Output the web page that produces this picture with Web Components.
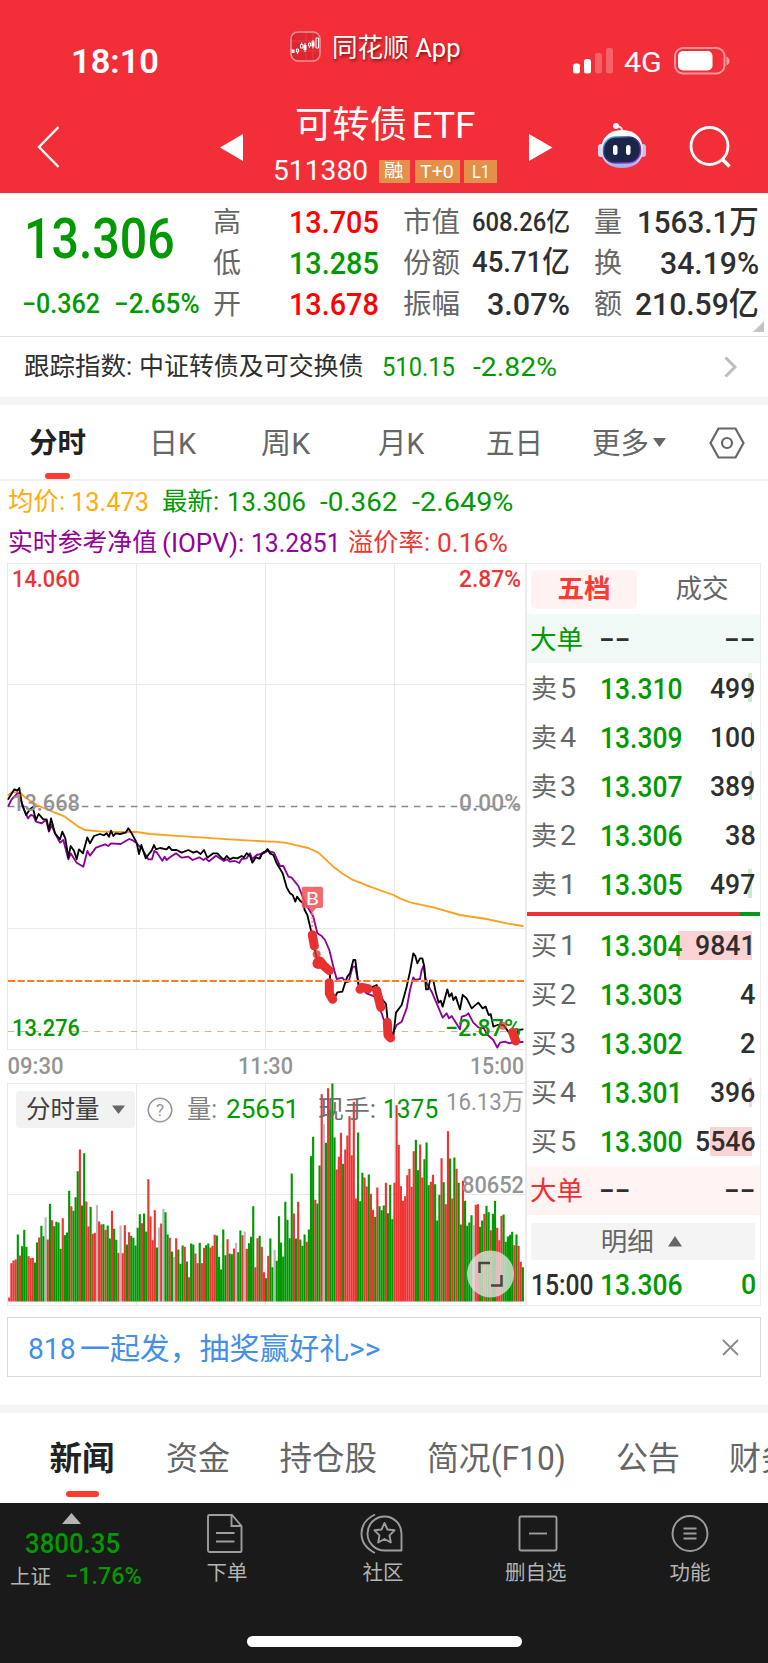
<!DOCTYPE html>
<html lang="zh-CN">
<head>
<meta charset="utf-8">
<meta name="viewport" content="width=device-width">
<title>可转债ETF 511380</title>
<style>
  html, body { margin: 0; padding: 0; background: #fff; }
  body { width: 768px; overflow-x: hidden; font-family: Roboto, "Noto Sans CJK SC", sans-serif; color: #2f2f2f; }
</style>
</head>
<body>
<stock-page></stock-page>

<script>
// Every element is plain markup in an open shadow root
function define(name, html) {
  customElements.define(name, class extends HTMLElement {
    constructor() {
      super();
      this.attachShadow({ mode: "open" }).innerHTML = `
        <style>
          :host { display: block; box-sizing: border-box; }
          .row { display: flex; align-items: center; box-sizing: border-box; }
          .g { color: #009a00; }
          .r { color: #f00; }
          svg { display: block; flex: none; }
        </style>${html}`;
    }
  });
}

// Text squeezed or stretched to the width in "w", with font size "s"
class FitText extends HTMLElement {
  constructor() {
    super();
    this.attachShadow({ mode: "open" });
    this.shadowRoot.innerHTML = `
      <style>
        :host { display: block; flex: none; white-space: nowrap; line-height: 1; }
        span { display: inline-block; transform-origin: 0 50%; vertical-align: top; }
      </style>
      <span><slot></slot></span>
    `;
  }

  connectedCallback() {
    const span = this.shadowRoot.querySelector("span");
    const width = Number(this.getAttribute("w"));
    this.style.fontSize = `${this.getAttribute("s")}px`;
    if (this.hasAttribute("gap")) this.style.marginLeft = `${this.getAttribute("gap")}px`;
    const natural = span.offsetWidth;
    if (natural && width) {
      span.style.transform = `scaleX(${width / natural})`;
      this.style.width = `${width}px`;
    }
  }
}

customElements.define("fit-text", FitText);

define("status-bar", `
  <style>
    :host { height: 96px; color: #fff; }
    .row { align-items: flex-start; }
    .time { margin: 43.5px 0 0 71px; font-weight: 600; }
    .icon { margin: 31px 0 0 131px; }
    .app { margin-top: 34.5px; text-shadow: 1px 2px 3px rgba(80, 0, 0, .65); }
    .signal { margin: 48px 0 0 112px; }
    .net { margin-top: 48.5px; }
    .battery { margin: 47px 0 0 11px; }
  </style>
  <div class="row">
    <fit-text class="time" w="88" s="34">18:10</fit-text>
    <svg class="icon" width="31" height="31" viewBox="0 0 31 31" fill="none" stroke="#fff">
      <rect x="1" y="1" width="29" height="29" rx="7" fill="#dc2630" stroke="#ff8f93" stroke-width="1.6"/>
      <path d="M2 10h27M2 20h27M16 2v27M23 2v27" stroke="#ef5a60" stroke-width=".5"/>
      <path d="M3 18.500v3.500M15 14v5M23 10.500v5" stroke-width="3"/>
      <path d="M6.500 18h2v3h-2zM7.500 21v2M10.500 13.500h2.500v3.500h-2.500zM11.700 11.500v2M18.500 12h2v3h-2zM19.500 15v2M26 7h2.500v10H26zM15 12v9M23 9v8.500"/>
    </svg>
    <fit-text class="app" gap="10.500" w="129" s="26">同花顺 App</fit-text>
    <svg class="signal" width="41" height="26" fill="#fff">
      <rect y="15.500" width="7" height="10" rx="2.500"/>
      <rect x="11" y="11" width="7" height="14.500" rx="2.500"/>
      <rect x="22" y="5" width="7" height="20.500" rx="2.500" opacity=".25"/>
      <rect x="33" width="7" height="25.500" rx="2.500" opacity=".25"/>
    </svg>
    <fit-text class="net" gap="10" w="38" s="28">4G</fit-text>
    <svg class="battery" style="margin-left:12px" width="56" height="28" fill="#fff">
      <rect x="1" y="1" width="49.500" height="25.500" rx="8" fill="none" stroke="#fff" stroke-width="2" opacity=".5"/>
      <rect x="4" y="4" width="34.500" height="19.500" rx="5"/>
      <path d="M52.500 9.500q3 1.500 3 4.500t-3 4.500z" opacity=".55"/>
    </svg>
  </div>
`);

define("nav-bar", `
  <style>
    :host { height: 97px; padding: 5px 0 0 37px; color: #fff; }
    .row { height: 92px; }
    .title { width: 224px; }
    .title .row { height: 46px; }
    .name { justify-content: center; padding-top: 2px; }
    i { display: flex; justify-content: center; align-items: center; height: 23px; margin-left: 4.500px; background: #e39048; font-style: normal; }
  </style>
  <div class="row">
    <svg width="22" height="42" fill="none" stroke="#fff" stroke-width="2.300"><path d="M21.500 1L2 21l19.500 20"/></svg>
    <svg style="margin-left:161px" width="23" height="27" fill="#fff"><path d="M0 13.500L23 0v27z"/></svg>
    <div class="title" style="margin-left:30px">
      <div class="row name"><fit-text w="112" s="37">可转债</fit-text><fit-text gap="5" w="64" s="37">ETF</fit-text></div>
      <div class="row" style="padding-top:2px">
        <fit-text w="95" s="28.500">511380</fit-text>
        <i style="width:32px;margin-left:10.500px"><fit-text w="20" s="18.500">融</fit-text></i>
        <i style="width:45px"><fit-text w="34" s="19">T+0</fit-text></i>
        <i style="width:33px"><fit-text w="18" s="19">L1</fit-text></i>
      </div>
    </div>
    <svg style="margin-left:32px" width="24" height="27" fill="#fff"><path d="M23.500 13.500L0 0v27z"/></svg>
    <svg style="margin:-2px 0 0 44px" width="50" height="48" viewBox="0 0 50 48">
      <defs>
        <linearGradient id="shell" x2="0" y2="1"><stop stop-color="#fff"/><stop offset=".65" stop-color="#dedff6"/><stop offset="1" stop-color="#a9a4e8"/></linearGradient>
        <linearGradient id="rim" x2="1" y2="1"><stop stop-color="#4cd9ff"/><stop offset=".4" stop-color="#23306a"/><stop offset="1" stop-color="#b04cff"/></linearGradient>
      </defs>
      <path d="M24.500 10c1-3 .5-5-5-6" fill="none" stroke="#eef" stroke-width="2"/>
      <circle cx="19" cy="4" r="3" fill="#f5f5ff"/>
      <rect x="1" y="22" width="6" height="13" rx="3" fill="#d6d6f4"/>
      <rect x="43" y="22" width="6" height="13" rx="3" fill="#c2c2ed"/>
      <path d="M25 8C11 8 4 17 4 28s8 18 21 18 21-7 21-18S39 8 25 8z" fill="url(#shell)"/>
      <rect x="6.500" y="15" width="37" height="26" rx="12" fill="#1c2548" stroke="url(#rim)" stroke-width="1.500"/>
      <rect x="16" y="23" width="4.500" height="10" rx="2.200" fill="#fff"/>
      <rect x="29" y="23" width="4.500" height="10" rx="2.200" fill="#fff"/>
    </svg>
    <svg style="margin-left:42px" width="43" height="43" fill="none" stroke="#fff" stroke-width="2.800">
      <circle cx="20.500" cy="20" r="18.500"/><path d="M33 33l7.500 7.500" stroke-width="3.600"/>
    </svg>
  </div>
`);

define("quote-panel", `
  <style>
    :host { display: flex; height: 144px; border-bottom: 1px solid #e4e4e4; position: relative; font-weight: 500; }
    .left { width: 213px; }
    .price { height: 90px; padding: 2px 0 0 24px; }
    .change { height: 41px; padding: 2px 0 0 22px; }
    .grid { display: grid; grid-template: repeat(3, 41px) / 166px 167px 165px; column-gap: 24px; padding-top: 8px; }
    .grid .row { justify-content: space-between; }
    .k { color: #666; font-weight: 400; padding-top: 3px; }
    svg { position: absolute; right: 4px; bottom: 4px; }
  </style>
  <div class="left g">
    <div class="row price"><fit-text w="151" s="56">13.306</fit-text></div>
    <div class="row change"><fit-text w="78" s="27">−0.362</fit-text><fit-text gap="14" w="86" s="27">−2.65%</fit-text></div>
  </div>
  <div class="grid">
    <div class="row"><fit-text class="k" w="28" s="28">高</fit-text><fit-text class="r" w="90" s="32">13.705</fit-text></div>
    <div class="row"><fit-text class="k" w="57" s="28">市值</fit-text><fit-text w="98" s="26">608.26亿</fit-text></div>
    <div class="row"><fit-text class="k" w="28" s="28">量</fit-text><fit-text w="122" s="32">1563.1万</fit-text></div>
    <div class="row"><fit-text class="k" w="28" s="28">低</fit-text><fit-text class="g" w="90" s="32">13.285</fit-text></div>
    <div class="row"><fit-text class="k" w="57" s="28">份额</fit-text><fit-text w="98" s="29.500">45.71亿</fit-text></div>
    <div class="row"><fit-text class="k" w="28" s="28">换</fit-text><fit-text w="99" s="32">34.19%</fit-text></div>
    <div class="row"><fit-text class="k" w="28" s="28">开</fit-text><fit-text class="r" w="90" s="32">13.678</fit-text></div>
    <div class="row"><fit-text class="k" w="57" s="28">振幅</fit-text><fit-text w="83" s="32">3.07%</fit-text></div>
    <div class="row"><fit-text class="k" w="28" s="28">额</fit-text><fit-text w="124" s="32">210.59亿</fit-text></div>
  </div>
  <svg width="11" height="11" fill="#c4c4c4"><path d="M11 0v11H0z"/></svg>
`);

define("index-row", `
  <style>
    :host { height: 68px; border-bottom: 8px solid #f4f4f4; padding: 0 31px 0 24px; }
    .row { height: 60px; }
  </style>
  <div class="row">
    <fit-text w="108" s="25.500">跟踪指数:</fit-text>
    <fit-text gap="7" w="225" s="25.500">中证转债及可交换债</fit-text>
    <fit-text class="g" gap="18" w="73" s="26">510.15</fit-text>
    <fit-text class="g" gap="18" w="84" s="26">-2.82%</fit-text>
    <svg style="margin-left:auto" width="13" height="22" fill="none" stroke="#bdbdbd" stroke-width="3"><path d="M1.500 1.500L11 11l-9.500 9.500"/></svg>
  </div>
`);

define("period-tabs", `
  <style>
    :host { height: 76px; border-bottom: 2px solid #f0f0f0; padding-left: 29px; color: #666; position: relative; }
    .row { height: 76px; }
    fit-text { padding-top: 2px; }
    .on { color: #222; font-weight: 700; }
    .bar { position: absolute; left: 45px; bottom: 0; width: 25px; height: 6px; border-radius: 3px; background: #fb3b32; }
  </style>
  <div class="row">
    <fit-text class="on" w="57" s="28.500">分时</fit-text>
    <fit-text gap="63" w="47" s="29">日K</fit-text>
    <fit-text gap="65" w="49" s="29">周K</fit-text>
    <fit-text gap="68" w="46" s="29">月K</fit-text>
    <fit-text gap="62" w="57" s="29">五日</fit-text>
    <fit-text gap="49" w="57" s="29">更多</fit-text>
    <svg style="margin-left:4px" width="14" height="10" fill="#666"><path d="M0 0h13L6.500 9z"/></svg>
    <svg style="margin-left:41.500px" width="36" height="32" fill="none" stroke="#666" stroke-width="2.200">
      <path d="M9.500 1.500h17L34.500 16l-8 14.500h-17L1.500 16z"/><circle cx="18" cy="16" r="5"/>
    </svg>
  </div>
  <div class="bar"></div>
`);

define("chart-legend", `
  <style>
    :host { padding-left: 8px; }
    .row { height: 41px; }
    .avg { color: #ffac0c; }
    .iopv { color: #95009c; }
    .prem { color: #ee3434; }
  </style>
  <div class="row">
    <fit-text class="avg" w="57" s="25">均价:</fit-text><fit-text class="avg" gap="6" w="78" s="26">13.473</fit-text>
    <fit-text class="g" gap="13" w="57" s="25">最新:</fit-text><fit-text class="g" gap="8" w="79" s="26">13.306</fit-text>
    <fit-text class="g" gap="14" w="78" s="26">-0.362</fit-text>
    <fit-text class="g" gap="14" w="102" s="26">-2.649%</fit-text>
  </div>
  <div class="row">
    <fit-text class="iopv" w="149" s="25">实时参考净值</fit-text><fit-text class="iopv" gap="5" w="82" s="26">(IOPV):</fit-text>
    <fit-text class="iopv" gap="7" w="90" s="26">13.2851</fit-text>
    <fit-text class="prem" gap="7" w="82" s="25">溢价率:</fit-text><fit-text class="prem" gap="7" w="71" s="26">0.16%</fit-text>
  </div>
`);

define("price-chart", `
  <style>
    text { font-size: 24px; font-weight: 500; }
    .line { fill: none; stroke-width: 5.500; stroke-linejoin: round; stroke-linecap: round; }
    .deal { fill: none; stroke: #e93030; stroke-width: 27; stroke-linejoin: round; stroke-linecap: round; }
  </style>
  <svg width="518" height="520" viewBox="7 563 518 520">
    <path d="M7 563.500h518M7 684.500h518M7 928.500h518M7 1049.500h518M7.500 563v487M136.500 563v487M265.500 563v487M394.500 563v487" stroke="#e9e9e9" fill="none"/>
    <path d="M8 806.500h516" stroke="#888" stroke-width="1.300" stroke-dasharray="6.500 5.800"/>
    <path d="M8 1031.500h516" stroke="#d8b48c" stroke-width="1.200" stroke-dasharray="6.500 5.800"/>
    <!-- morning session -->
    <g transform="translate(0 560) scale(.33333)">
      <polyline class="line" stroke="#ff9f1c" points="25,705 35,697 60,697 75,712 110,735 150,752 195,770 235,800 255,810 300,814 360,816 410,816 450,822 520,827 600,832 700,839 810,845"/>
      <polyline class="line" stroke="#8d0099" points="25,738 35,718 52,700 60,700 68,740 84,775 92,765 100,767 108,785 125,790 138,780 147,815 155,795 165,820 180,848 190,840 205,898 212,880 230,908 250,920 262,873 270,887 288,863 315,853 325,858 333,850 362,852 377,843 388,837 400,842 410,850 425,865 445,898 456,898 463,873 470,877 487,902 494,890 500,900 510,892 528,880 545,893 565,890 578,900 598,892 610,900 617,895 627,904 648,887 672,903 680,898 690,905 705,903 718,909 725,897 740,895 750,880 757,897 770,885 790,880 803,872"/>
      <polyline class="line" stroke="#000" points="25,717 43,688 52,692 58,684 63,722 78,765 90,748 98,742 108,780 116,762 130,778 140,778 147,812 153,775 165,820 180,838 187,815 196,835 205,892 212,858 222,872 230,898 237,868 249,880 262,832 270,850 282,828 300,822 312,826 320,820 327,830 333,812 340,828 347,820 360,822 377,818 385,805 395,820 410,848 417,882 424,855 437,895 447,882 455,872 462,855 468,868 480,864 500,868 507,860 515,870 530,870 545,878 565,870 580,878 590,874 602,882 612,870 622,893 640,880 652,880 665,894 672,898 680,888 690,898 700,893 712,895 725,888 732,892 740,880 750,888 757,908 768,892 778,896 788,878 797,876 803,868 810,880"/>
    </g>
    <text x="12" y="811" fill="#949494" textLength="68" lengthAdjust="spacingAndGlyphs">13.668</text>
    <!-- afternoon session -->
    <g transform="translate(260 780) scale(.33333)">
      <polyline class="line" stroke="#ff9f1c" points="30,185 40,185 75,188 110,196 145,204 175,218 220,260 250,283 275,298 330,320 400,345 420,355 450,367 520,382 600,405 680,417 740,430 788,438"/>
      <polyline class="line" stroke="#8d0099" points="3,222 22,212 42,218 60,258 70,258 85,290 95,293 115,318 130,355 145,385 160,410 172,460 185,468 195,480 208,510 220,560 230,597 247,593 258,607 266,605 278,560 286,560 297,620 320,640 345,650 365,700 378,740 390,780 410,735 425,725 440,685 450,630 460,592 466,600 480,597 485,570 490,558 500,610 515,635 530,670 548,713 560,700 567,715 575,708 600,748 605,710 618,706 625,700 640,728 655,742 672,745 680,762 700,780 712,803 720,788 735,785 748,790 758,787 788,786"/>
      <polyline class="line" stroke="#000" points="0,235 5,222 15,215 22,208 30,220 40,225 50,250 68,280 80,322 90,340 98,345 106,365 111,350 120,362 130,370 134,390 142,405 148,430 155,460 162,500 172,540 185,540 210,570 210,640 222,658 232,637 247,635 255,610 262,590 270,580 280,540 286,540 297,625 310,615 335,622 350,615 360,650 378,672 385,740 400,768 408,698 425,675 440,620 450,575 460,520 466,528 472,550 480,535 487,535 493,560 498,628 504,628 510,602 520,602 528,640 536,668 542,662 548,680 562,628 568,650 575,640 580,660 587,650 600,688 608,645 620,655 635,685 655,668 668,685 677,680 686,705 692,702 700,740 712,735 730,735 745,755 755,760 768,785 775,750 788,748"/>
    </g>
    <path d="M8 981h516" stroke="#ff7f1f" stroke-width="2" stroke-dasharray="7.200 2.400"/>
    <text x="445" y="1035.500" fill="#009a00" textLength="76" lengthAdjust="spacingAndGlyphs">−2.87%</text>
    <g transform="translate(260 780) scale(.33333)">
      <path class="deal" d="M157 464L163 498M171 551L180 543L188 552M190 556L208 572M208 608v32L218 658M300 628L306 622L325 626M350 631L362 682M382 727L384 765L392 774M758 757L767 783"/>
      <circle cx="176" cy="549" r="18" fill="#e93030"/>
      <circle cx="170" cy="523" r="12" fill="#e93030" opacity=".8"/>
      <circle cx="728" cy="737" r="12" fill="#e93030" opacity=".7"/>
      <path d="M157 398v50" stroke="#f28080" stroke-width="6" stroke-dasharray="6 6"/>
      <path d="M131 320h52q6 0 6 6v52q0 6-6 6h-14l-12 14-12-14h-14q-6 0-6-6v-52q0-6 6-6z" fill="#ed5557" fill-opacity=".87"/>
    </g>
    <text x="306" y="905" style="font-size:19px;font-weight:400" fill="#fff" textLength="13" lengthAdjust="spacingAndGlyphs">B</text>
    <text x="12" y="586.500" fill="#ee3333" textLength="68" lengthAdjust="spacingAndGlyphs">14.060</text>
    <text x="459" y="586.500" fill="#ee3333" textLength="62" lengthAdjust="spacingAndGlyphs">2.87%</text>
    <text x="459" y="811" fill="#949494" textLength="62" lengthAdjust="spacingAndGlyphs">0.00%</text>
    <text x="12" y="1035.500" fill="#009a00" textLength="68" lengthAdjust="spacingAndGlyphs">13.276</text>
    <g fill="#949494">
      <text x="7.500" y="1074" textLength="56" lengthAdjust="spacingAndGlyphs">09:30</text>
      <text x="238" y="1074" textLength="55" lengthAdjust="spacingAndGlyphs">11:30</text>
      <text x="470" y="1074" textLength="54" lengthAdjust="spacingAndGlyphs">15:00</text>
    </g>
  </svg>
`);

// One token per minute: bar top and its colour (r up, g down, n flat)
const SESSIONS = [
  { start: 0, floor: 664, bars: "652r 549r 541r 538r 463g 526r 498g 449g 500g 528r 534r 533r 547g 487g 472r 437g 468g 411n 478r 371g 420r 438g 425g 427g 506g 414r 465g 457g 332g 378r 392g 351g 273g 208r 376g 219g 364r 439r 380g 461r 458r 375n 424r 433r 432g 449r 436g 475g 392r 446g 479g 518r 436n 519r 435r 493g 456r 467g 473g 496g 443g 402g 429r 400g 454g 297r 409r 480r 390r 502g 442n 430r 386n 396g 463g 473r 514g 530n 474r 508g 551g 496g 500r 544g 591r 490g 493g 520r 549r 488g 549r 503r 495g 490g 502r 497r 464r 466g 530g 568g 448g 525g 477r 520g 522g 505r 488n 516g 451g 465r 454n 506r 489g 470g 378g 561r 474r" },
  { start: 117, floor: 694, bars: "497g 530r 606r 624g 557r 505g 591g 540n 572g 438g 517g 559g 395g 449g 504g 310g 430r 505g 395r 508g 527g 493g 515r 478g 258g 200g 389r 400g 286g 72r 162n 218g 54r 118g 40g 202g 298r 260r 188r 281g 238r 196r 138r 255r 95r 385r 187g 393g 308g 322r 349r 313g 371r 419r 440g 352r 408g 420g 406g 338r 429g 344g 447g 338r 105r 224r 348r 392r 378r 315r 296r 350r 243r 209g 300g 223r 322r 267g 217g 345g 335r 314r 342g 451g 374g 264r 336g 402r 183r 265g 385r 262g 296r 338g 463g 332r 392g 467g 457g 435g 465n 404r 402r 470g 451g 431r 407g 426g 480r 431g 392g 473r 510r 437r 433g 515g 499g 494g 485g 525r 493g 527r 575r 591g" }
];
const BAR_COLORS = { r: "#ee3333", g: "#009a00", n: "#b9b9b9" };

const volumeBars = SESSIONS.map(({ start, floor, bars }) =>
  bars.split(" ").map((bar, i) => {
    const height = (floor - parseInt(bar)) / 3;
    const x = 8.2 + (start + i) * 2.14;
    return `<rect x="${x.toFixed(2)}" y="${(1301.5 - height).toFixed(1)}" width="2.14" height="${height.toFixed(1)}" fill="${BAR_COLORS[bar.slice(-1)]}"/>`;
  }).join("")
).join("");

define("volume-chart", `
  <style>
    :host { position: relative; height: 223px; }
    .tools { position: absolute; left: 8.500px; top: 8px; height: 37px; color: #808080; }
    .pick { width: 119px; height: 37px; background: #f2f2f2; border-radius: 4px; color: #404040; }
    text { font-size: 24px; fill: #949494; }
  </style>
  <svg width="518" height="223" viewBox="7 1083 518 223">
    <path d="M7 1083.500h518M7 1194.500h518M7 1305.500h518M7.500 1083v223M136.500 1083v223M265.500 1083v223M394.500 1083v223" stroke="#e9e9e9" fill="none"/>
    ${volumeBars}
    <text x="446" y="1110" textLength="78" lengthAdjust="spacingAndGlyphs">16.13万</text>
    <text x="462" y="1192.500" textLength="62" lengthAdjust="spacingAndGlyphs" style="font-weight:500">80652</text>
    <circle cx="490.500" cy="1274" r="23.500" fill="#e4e4e4" fill-opacity=".76"/>
    <path d="M479.500 1273v-10h10.500M501.500 1275v10.500H491" fill="none" stroke="#454545" stroke-width="2.500"/>
  </svg>
  <div class="row tools">
    <div class="row pick">
      <fit-text gap="10.500" w="74" s="25.500" style="padding-top:1px">分时量</fit-text>
      <svg style="margin-left:12px" width="13" height="10" fill="#666"><path d="M0 .5h13L6.500 9z"/></svg>
    </div>
    <svg style="margin-left:12.500px" width="26" height="26">
      <circle cx="13" cy="13" r="11.700" fill="none" stroke="#949494" stroke-width="1.600"/>
      <text x="13" y="19" text-anchor="middle" style="font-size:17px">?</text>
    </svg>
    <fit-text gap="13.500" w="30" s="25">量:</fit-text>
    <fit-text class="g" gap="9" w="73" s="25">25651</fit-text>
    <fit-text gap="19" w="58" s="25" style="color:#707070">现手:</fit-text>
    <fit-text class="g" gap="7" w="55" s="25">1375</fit-text>
  </div>
`);

// <depth-row label price qty bar>: one level, "bar" is the width of its volume bar
class DepthRow extends HTMLElement {
  constructor() {
    super();
    this.attachShadow({ mode: "open" });
  }

  connectedCallback() {
    const get = (name) => this.getAttribute(name) || "";
    const [side, level] = get("label");
    const qty = get("qty");
    this.shadowRoot.innerHTML = `
      <style>
        :host { display: grid; box-sizing: border-box; grid-template-columns: 69px 1fr auto; align-items: center; position: relative; height: 49px; padding: 3px 4px 0 4px; }
        .label { display: flex; color: #666; }
        .price { color: #009a00; font-weight: 500; }
        .qty { font-weight: 500; }
        .bar { position: absolute; z-index: -1; right: 8px; top: 10px; height: 29px; width: ${get("bar") || 0}px; background: ${side === "卖" ? "#cdeacd" : "#fbd3d4"}; }
      </style>
      <div class="bar"></div>
      <div class="label"><fit-text w="26" s="26">${side}</fit-text><fit-text gap="3" w="16" s="27">${level}</fit-text></div>
      <fit-text class="price" w="82" s="29">${get("price")}</fit-text>
      <fit-text class="qty" w="${qty.length * 15.2}" s="28.500">${qty}</fit-text>
    `;
  }
}

customElements.define("depth-row", DepthRow);

define("order-book", `
  <style>
    :host { width: 235.500px; height: 743px; border: solid #ececec; border-width: 1px 1px 1px 2px; position: relative; z-index: 0; }
    .tabs { height: 50px; padding: 0 0 0 4px; }
    .tab { display: flex; justify-content: center; align-items: center; width: 106px; height: 39px; }
    .on { background: #fff2f2; border-radius: 5px; color: #fb3b32; font-weight: 700; }
    .big { height: 49px; padding: 3px 4px 0 3px; }
    .split { display: flex; height: 4px; margin: 4px 0 4.500px; }
    .detail { justify-content: center; height: 37px; margin: 8px 5px 0 4px; padding-top: 2px; background: #f4f4f4; color: #666; }
    .last { height: 45px; padding: 7px 4px 0 4px; font-weight: 500; }
  </style>
  <div class="row tabs">
    <div class="tab on"><fit-text w="53" s="26.500">五档</fit-text></div>
    <div class="tab" style="margin-left:12px;color:#666"><fit-text w="53" s="26.500">成交</fit-text></div>
  </div>
  <div class="row big" style="background:#f1faf6">
    <fit-text class="g" w="53" s="26.500">大单</fit-text><fit-text gap="16" w="32" s="29" style="font-weight:500">−−</fit-text><fit-text style="margin-left:auto;font-weight:500" w="32" s="29">−−</fit-text>
  </div>
  <depth-row label="卖5" price="13.310" qty="499" bar="4"></depth-row>
  <depth-row label="卖4" price="13.309" qty="100" bar="1"></depth-row>
  <depth-row label="卖3" price="13.307" qty="389" bar="3"></depth-row>
  <depth-row label="卖2" price="13.306" qty="38"></depth-row>
  <depth-row label="卖1" price="13.305" qty="497" bar="4"></depth-row>
  <div class="split"><div style="width:213px;background:#ee3033"></div><div style="flex:1;background:#009a1a"></div></div>
  <depth-row label="买1" price="13.304" qty="9841" bar="74"></depth-row>
  <depth-row label="买2" price="13.303" qty="4"></depth-row>
  <depth-row label="买3" price="13.302" qty="2"></depth-row>
  <depth-row label="买4" price="13.301" qty="396" bar="3"></depth-row>
  <depth-row label="买5" price="13.300" qty="5546" bar="42"></depth-row>
  <div class="row big" style="background:#fff3f3">
    <fit-text style="color:#ee3033" w="53" s="26.500">大单</fit-text><fit-text gap="16" w="32" s="29" style="font-weight:500">−−</fit-text><fit-text style="margin-left:auto;font-weight:500" w="32" s="29">−−</fit-text>
  </div>
  <div class="row detail">
    <fit-text w="53" s="26.500">明细</fit-text>
    <svg style="margin:-2px 3px 0 14px" width="14" height="11" fill="#666"><path d="M0 10.500h14L7 0z"/></svg>
  </div>
  <div class="row last">
    <fit-text w="63" s="29">15:00</fit-text><fit-text class="g" gap="6" w="82" s="29">13.306</fit-text><fit-text class="g" style="margin-left:auto" w="15" s="28.500">0</fit-text>
  </div>
`);

define("promo-strip", `
  <style>
    :host { display: flex; align-items: center; height: 60px; margin: 11px 7px 28px; padding: 0 21px 0 20px; border: 1px solid #d9d9d9; color: #438fe9; }
    fit-text { padding-top: 3px; }
  </style>
  <fit-text w="48" s="30">818</fit-text><fit-text gap="4" w="300" s="30">一起发，抽奖赢好礼&gt;&gt;</fit-text>
  <svg style="margin-left:auto" width="17" height="17" stroke="#8a8a8a" stroke-width="1.800"><path d="M1 1l15 15M16 1L1 16"/></svg>
`);

define("news-tabs", `
  <style>
    :host { height: 98px; border-top: 8px solid #f4f4f4; padding-left: 49.500px; color: #666; position: relative; overflow: hidden; }
    .row { height: 93px; }
    .on { color: #222; font-weight: 700; }
    .bar { position: absolute; left: 66px; bottom: 6px; width: 32.500px; height: 6px; border-radius: 3px; background: #fb3b32; }
  </style>
  <div class="row">
    <fit-text class="on" w="65" s="32.500">新闻</fit-text>
    <fit-text gap="51" w="64" s="32.500">资金</fit-text>
    <fit-text gap="50" w="98" s="32.500">持仓股</fit-text>
    <fit-text gap="49" w="139" s="32.500">简况(F10)</fit-text>
    <fit-text gap="50" w="64" s="32.500">公告</fit-text>
    <fit-text gap="49" w="64" s="32.500">财务</fit-text>
  </div>
  <div class="bar"></div>
`);

define("bottom-bar", `
  <style>
    :host { height: 160px; background: #1a1a1a; color: #b4b4b4; }
    .items { height: 133px; align-items: flex-start; }
    .index { width: 144px; padding-top: 10px; }
    .index > svg { margin-left: 62px; }
    .item { display: flex; flex-direction: column; align-items: center; width: 80px; padding-top: 10px; }
    .item svg { margin-bottom: 10px; }
    .home { width: 275px; height: 11px; border-radius: 6px; margin: 0 0 0 247px; background: #fff; }
  </style>
  <div class="row items">
    <div class="index">
      <svg width="19" height="11" fill="#b4b4b4"><path d="M9.500 0L19 11H0z"/></svg>
      <fit-text class="g" style="margin:6px 0 5px;font-weight:500" gap="24.500" w="95" s="28.500">3800.35</fit-text>
      <div class="row"><fit-text gap="10" w="41" s="20.500" style="padding-top:3px">上证</fit-text><fit-text class="g" gap="14" w="77" s="24" style="font-weight:500">−1.76%</fit-text></div>
    </div>
    <div class="item" style="margin-left:43px">
      <svg width="38" height="40" style="margin-left:-4px" fill="none" stroke="#9d9d9d" stroke-width="1.900"><path d="M3.500 2h22.500l9.500 11v25q0 1-1 1H3.500q-1.500 0-1.500-1.500V3.500Q2 2 3.500 2zM25.500 2v11h10M10 20h18.500M10 28.500h18.500"/></svg>
      <fit-text w="41" s="20.500">下单</fit-text>
    </div>
    <div class="item" style="margin-left:76px">
      <svg width="44" height="41" style="margin-left:-3px" fill="none" stroke="#9d9d9d" stroke-width="1.900" stroke-linejoin="round"><path d="M15 1.500C-3 10-3 31 15 40M41.500 37.500v-17a17 17 0 1 0-17 17zM24.500 10l3 6.500 7 .8-5 5 1.300 7.200-6.300-3.500-6.300 3.500 1.300-7.200-5-5 7-.8z"/></svg>
      <fit-text w="41" s="20.500" style="margin-top:-1px">社区</fit-text>
    </div>
    <div class="item" style="margin-left:73px">
      <svg width="40" height="40" style="margin-left:4px" fill="none" stroke="#9d9d9d" stroke-width="1.900"><rect x="1.500" y="3.500" width="37" height="34" rx="1.500"/><path d="M11 20.500h18"/></svg>
      <fit-text w="62" s="20.500">删自选</fit-text>
    </div>
    <div class="item" style="margin-left:74px">
      <svg width="40" height="40" fill="none" stroke="#9d9d9d" stroke-width="1.900"><circle cx="20" cy="20.500" r="17.500"/><path d="M13.500 15.500h13M13.500 20.500h13M13.500 25.500h13"/></svg>
      <fit-text w="41" s="20.500">功能</fit-text>
    </div>
  </div>
  <div class="home"></div>
`);

define("stock-page", `
  <style>
    :host { width: 768px; height: 1663px; overflow: hidden; background: #fff; }
    .top { background: #f22f38; height: 193px; }
    .market { display: flex; padding-left: 7px; }
  </style>
  <div class="top"><status-bar></status-bar><nav-bar></nav-bar></div>
  <quote-panel></quote-panel>
  <index-row></index-row>
  <period-tabs></period-tabs>
  <chart-legend></chart-legend>
  <div class="market">
    <div><price-chart></price-chart><volume-chart></volume-chart></div>
    <order-book></order-book>
  </div>
  <promo-strip></promo-strip>
  <news-tabs></news-tabs>
  <bottom-bar></bottom-bar>
`);
</script>
</body>
</html>
